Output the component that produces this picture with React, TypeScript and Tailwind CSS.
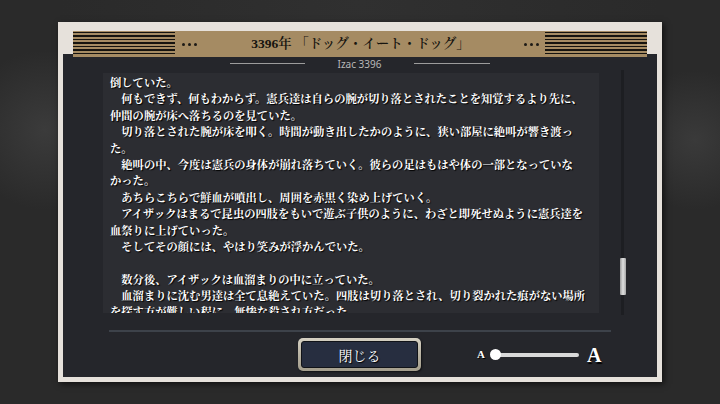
import React from "react";

const lines: string[] = [
  "倒していた。",
  "　何もできず、何もわからず。憲兵達は自らの腕が切り落とされたことを知覚するより先に、",
  "仲間の腕が床へ落ちるのを見ていた。",
  "　切り落とされた腕が床を叩く。時間が動き出したかのように、狭い部屋に絶叫が響き渡っ",
  "た。",
  "　絶叫の中、今度は憲兵の身体が崩れ落ちていく。彼らの足はもはや体の一部となっていな",
  "かった。",
  "　あちらこちらで鮮血が噴出し、周囲を赤黒く染め上げていく。",
  "　アイザックはまるで昆虫の四肢をもいで遊ぶ子供のように、わざと即死せぬように憲兵達を",
  "血祭りに上げていった。",
  "　そしてその顔には、やはり笑みが浮かんでいた。",
  "",
  "　数分後、アイザックは血溜まりの中に立っていた。",
  "　血溜まりに沈む男達は全て息絶えていた。四肢は切り落とされ、切り裂かれた痕がない場所",
  "を探す方が難しい程に、無惨な殺され方だった。",
];

function Dots() {
  return (
    <div className="flex items-center gap-[3px]">
      <div className="w-[3px] h-[3px] rounded-full bg-[#1c1a16]" />
      <div className="w-[3px] h-[3px] rounded-full bg-[#1c1a16]" />
      <div className="w-[3px] h-[3px] rounded-full bg-[#1c1a16]" />
    </div>
  );
}

function Stripes() {
  return (
    <div className="w-[102px] h-[24px] bg-[repeating-linear-gradient(to_bottom,#15130f_0px,#15130f_1.5px,#a58b63_1.5px,#a58b63_3.5px)]" />
  );
}

export default function App() {
  return (
    <div className="w-[720px] h-[404px] overflow-hidden bg-[#2a2a2a] bg-[radial-gradient(circle_at_45px_130px,#3b3b3b_0px,transparent_80px),radial-gradient(circle_at_695px_140px,#3a3a3a_0px,transparent_70px),radial-gradient(circle_at_360px_0px,#303030_0px,transparent_300px)] pt-[22px] pl-[58px]">
      <div className="w-[604px] h-[360px] bg-[#e6e1db] flex flex-col px-[5px] pb-[5px] pt-[9px] shadow-[2px_2px_6px_rgba(0,0,0,0.6)]">
        {/* header */}
        <div className="mx-[10px] h-[26px] -mb-[3px] relative z-10 bg-[#a58b63] flex items-center">
          <Stripes />
          <div className="ml-[7px]">
            <Dots />
          </div>
          <div className="flex-1 text-center text-[13.5px] leading-none text-[#16140f] font-['Liberation_Serif','Noto_Serif_CJK_JP','Noto_Sans_CJK_JP',serif] font-semibold whitespace-nowrap">
            3396年 「ドッグ・イート・ドッグ」
          </div>
          <div className="mr-[6px]">
            <Dots />
          </div>
          <Stripes />
        </div>

        {/* panel */}
        <div className="flex-1 bg-[#25262b] flex flex-col">
          {/* label row */}
          <div className="h-[19px] flex items-center justify-center gap-[33px]">
            <div className="w-[75px] h-px bg-[#9c9c9c]" />
            <div className="text-[10px] leading-none text-[#b8b8b8] font-['Noto_Sans',sans-serif]">Izac 3396</div>
            <div className="w-[76px] h-px bg-[#9c9c9c]" />
          </div>

          {/* text + scrollbar */}
          <div className="flex items-start h-[240px]">
            <div className="ml-[40px] w-[496px] h-[240px] overflow-hidden bg-[#2c2d32] pl-[7px] pt-[1px]">
              {lines.map((l, i) => (
                <div
                  key={i}
                  className="h-[16.4px] leading-[16.4px] text-[11.3px] whitespace-nowrap text-white font-bold font-['Noto_Serif_CJK_JP','Noto_Sans_CJK_JP',serif] [text-shadow:1px_1px_1px_#000]"
                >
                  {l || "\u00a0"}
                </div>
              ))}
            </div>
            <div className="ml-[22px] -mt-[3px] w-[3px] h-[245px] bg-[#1d1e22] relative">
              <div className="absolute left-[-1px] top-[188px] w-[6px] h-[37px] rounded-[1px] bg-[linear-gradient(to_right,#9a9a9a,#e0e0e0,#a5a5a5)]" />
            </div>
          </div>

          {/* separator */}
          <div className="mt-[17px] ml-[46px] w-[502px] h-[2px] bg-[#3d424a]" />

          {/* bottom row */}
          <div className="mt-[6px] flex items-center">
            <div className="ml-[235px] w-[123px] h-[33px] rounded-[5px] p-[3px] bg-[linear-gradient(to_bottom,#d6d1c3,#b9b3a3,#a49e8d)] shadow-[1px_1px_2px_rgba(0,0,0,0.6)]">
              <div className="w-full h-full rounded-[3px] border border-[#111318] bg-[#272e40] flex items-center justify-center">
                <span className="text-[14px] leading-none text-white font-['Noto_Serif_CJK_JP','Noto_Sans_CJK_JP',serif] [text-shadow:1px_1px_1px_#000]">
                  閉じる
                </span>
              </div>
            </div>

            <div className="ml-[56px] flex items-center">
              <span className="text-[11px] leading-none text-white font-bold font-['Liberation_Serif',serif] [text-shadow:1px_1px_0_#000]">A</span>
              <div className="ml-[5px] relative z-10 w-[11px] h-[11px] rounded-full bg-white" />
              <div className="-ml-[5px] w-[83px] h-[4px] rounded-full bg-[#d9d9d9]" />
              <span className="ml-[8px] text-[20px] leading-none text-white font-bold font-['Liberation_Serif',serif] [text-shadow:1px_2px_1px_#000]">A</span>
            </div>
          </div>
        </div>
      </div>
    </div>
  );
}
